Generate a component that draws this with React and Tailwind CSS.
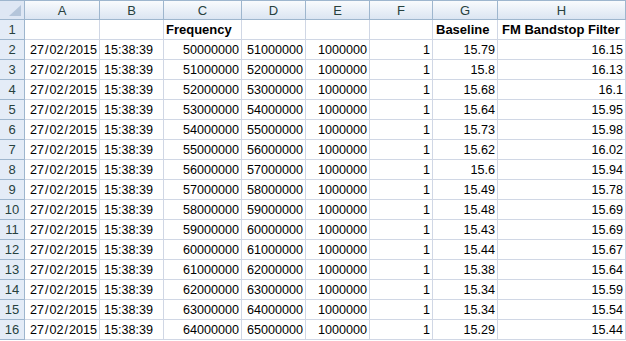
const cols = ['A', 'B', 'C', 'D', 'E', 'F', 'G', 'H'];

const values = [
  ['15.79', '16.15'],
  ['15.8', '16.13'],
  ['15.68', '16.1'],
  ['15.64', '15.95'],
  ['15.73', '15.98'],
  ['15.62', '16.02'],
  ['15.6', '15.94'],
  ['15.49', '15.78'],
  ['15.48', '15.69'],
  ['15.43', '15.69'],
  ['15.44', '15.67'],
  ['15.38', '15.64'],
  ['15.34', '15.59'],
  ['15.34', '15.54'],
  ['15.29', '15.44'],
];

const rows = values.map(([base, fm], i) => [
  '27/02/2015',
  '15:38:39',
  String(50000000 + i * 1000000),
  String(51000000 + i * 1000000),
  '1000000',
  '1',
  base,
  fm,
]);

// Calibri's slash is wider than Arial's, pad it a little
const DateText = ({ value }) => {
  const parts = value.split('/');
  return (
    <span>
      {parts.map((p, i) => (
        <span key={i}>
          {i > 0 && <span className="px-[1px]">/</span>}
          {p}
        </span>
      ))}
    </span>
  );
};

const Cell = ({ children, className = '' }) => (
  <div className={`h-5 border-r border-b border-[#d0d7e5] flex items-center pt-[1px] overflow-hidden whitespace-nowrap ${className}`}>
    {children}
  </div>
);

const RowHead = ({ children }) => (
  <div className="h-5 bg-[#e4ecf7] border-r border-b border-[#9eb6ce] flex items-center justify-center pt-[1px] text-[#27413e] text-[13px]">
    {children}
  </div>
);

const App = () => {
  return (
    <div
      className="w-[626px] h-[341px] bg-white overflow-hidden text-[12.6px] text-black"
      style={{ fontFamily: '"Liberation Sans", Arial, sans-serif' }}
    >
      <div className="grid grid-cols-[25px_75px_64px_78px_64px_64px_63px_65px_128px]">
        <div className="h-5 border-t border-r border-b border-[#9eb6ce] bg-[#dee7f4] relative">
          <svg className="absolute right-[3px] bottom-[3px]" width="12" height="11" viewBox="0 0 12 11">
            <polygon points="12,0 12,11 0,11" fill="#b4c5da" />
          </svg>
        </div>
        {cols.map((c) => (
          <div
            key={c}
            className="h-5 border-t border-r border-b border-[#9eb6ce] bg-gradient-to-b from-[#f9fbfd] to-[#dbe5f2] flex items-center justify-center pt-[1px] text-[#27413e] text-[13px]"
          >
            {c}
          </div>
        ))}

        <RowHead>1</RowHead>
        <Cell />
        <Cell />
        <Cell className="font-bold text-[13px] pl-[2px]">Frequency</Cell>
        <Cell />
        <Cell />
        <Cell />
        <Cell className="font-bold text-[13px] pl-[3px]">Baseline</Cell>
        <Cell className="font-bold text-[13px] pl-[4px]">FM Bandstop Filter</Cell>

        {rows.map((r, i) => (
          <div key={i} className="contents">
            <RowHead>{i + 2}</RowHead>
            {r.map((v, j) =>
              j === 1 ? (
                <Cell key={j} className="pl-[4px]">{v}</Cell>
              ) : (
                <Cell key={j} className="justify-end pr-[2px]">
                  {j === 0 ? <DateText value={v} /> : v}
                </Cell>
              )
            )}
          </div>
        ))}
      </div>
    </div>
  );
};

export default App;
